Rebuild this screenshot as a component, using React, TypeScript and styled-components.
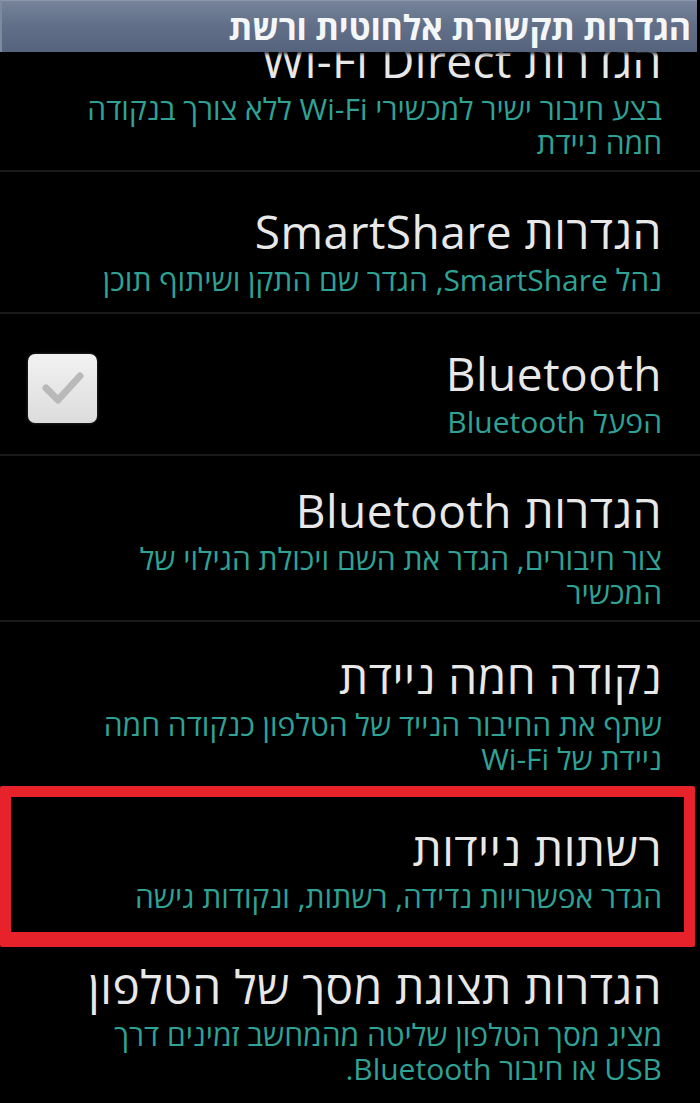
import * as React from "react";
import styled, { createGlobalStyle } from "styled-components";

const GlobalStyle = createGlobalStyle`
  html, body {
    margin: 0;
    padding: 0;
    background: #000;
  }
  body {
    font-family: "Open Sans", "DejaVu Sans", sans-serif;
  }
`;

const Screen = styled.div`
  width: 700px;
  height: 1103px;
  background: #000;
  display: flex;
  flex-direction: column;
  overflow: hidden;
  direction: rtl;
`;

const TitleBar = styled.header`
  flex: 0 0 auto;
  height: 52px;
  margin-right: 3px;
  padding: 0 6px 0 0;
  display: flex;
  align-items: center;
  background: linear-gradient(#76839a 0%, #627189 45%, #55647c 100%);
  border-top: 1px solid #8c98aa;
  border-left: 2px solid #7e8a9d;
  box-sizing: border-box;
  position: relative;
  z-index: 3;
  box-shadow: 0 2px 3px rgba(0, 0, 0, 0.8);
`;

const TitleText = styled.h1`
  margin: 0;
  font-size: 34px;
  font-weight: 700;
  color: #f4f6f8;
  letter-spacing: -0.2px;
  white-space: nowrap;
`;

const ScrollArea = styled.div`
  flex: 1 1 auto;
  overflow: hidden;
  position: relative;
  z-index: 1;
`;

const ListBody = styled.div<{ $offset: number }>`
  margin-top: ${(p) => -p.$offset}px;
  display: flex;
  flex-direction: column;
`;

const Row = styled.div<{ $divider?: boolean; $minHeight?: number }>`
  min-height: ${(p) => p.$minHeight ?? 142}px;
  box-sizing: border-box;
  padding: 26px 38px 10px 28px;
  display: flex;
  align-items: center;
  gap: 20px;
  border-bottom: ${(p) =>
    p.$divider === false ? "none" : "2px solid #1a1a1a"};
`;

const RowText = styled.div`
  flex: 1 1 auto;
  display: flex;
  flex-direction: column;
  gap: 4px;
`;

const RowTitle = styled.div`
  font-size: 46px;
  line-height: 56px;
  color: #e8e8e8;
  letter-spacing: 0.5px;
  white-space: nowrap;
`;

const RowSummary = styled.div`
  max-width: 612px;
  font-size: 30px;
  line-height: 34px;
  color: #2fa295;
`;

const Check = styled.div`
  flex: 0 0 auto;
  width: 69px;
  height: 69px;
  margin-bottom: 8px;
  border-radius: 7px;
  background: linear-gradient(#f2f2f2, #dcdcdc);
  display: flex;
  align-items: center;
  justify-content: center;
  box-shadow: 0 0 3px rgba(255, 255, 255, 0.25);
`;

const Marked = styled.div`
  position: relative;
`;

const MarkFrame = styled.div`
  position: absolute;
  top: 0;
  left: 0;
  right: 5px;
  bottom: -15px;
  border: 11px solid #e8222b;
  border-bottom-width: 15px;
  border-radius: 2px;
  z-index: 2;
  pointer-events: none;
`;

interface ItemProps {
  title: string;
  summary: React.ReactNode;
  checked?: boolean;
  divider?: boolean;
  minHeight?: number;
}

const CheckMark = () => (
  <svg width="46" height="40" viewBox="0 0 46 40">
    <path
      d="M6 20 L18 32 L40 8"
      fill="none"
      stroke="#b9b9b9"
      strokeWidth="7"
      strokeLinecap="round"
      strokeLinejoin="round"
    />
  </svg>
);

const SettingsItem: React.FunctionComponent<ItemProps> = ({
  title,
  summary,
  checked,
  divider,
  minHeight,
}) => (
  <Row $divider={divider} $minHeight={minHeight}>
    <RowText>
      <RowTitle>{title}</RowTitle>
      <RowSummary>{summary}</RowSummary>
    </RowText>
    {checked && (
      <Check>
        <CheckMark />
      </Check>
    )}
  </Row>
);

export default function App() {
  return (
    <>
      <GlobalStyle />
      <Screen>
        <TitleBar>
          <TitleText>הגדרות תקשורת אלחוטית ורשת</TitleText>
        </TitleBar>
        <ScrollArea>
          <ListBody $offset={46}>
            <SettingsItem
              title="הגדרות Wi-Fi Direct"
              summary="בצע חיבור ישיר למכשירי Wi-Fi ללא צורך בנקודה חמה ניידת"
            />
            <SettingsItem
              title="הגדרות SmartShare"
              summary="נהל SmartShare, הגדר שם התקן ושיתוף תוכן"
            />
            <SettingsItem title="Bluetooth" summary="הפעל Bluetooth" checked />
            <SettingsItem
              title="הגדרות Bluetooth"
              summary="צור חיבורים, הגדר את השם ויכולת הגילוי של המכשיר"
            />
            <SettingsItem
              title="נקודה חמה ניידת"
              summary="שתף את החיבור הנייד של הטלפון כנקודה חמה ניידת של Wi-Fi"
              divider={false}
            />
            <Marked>
              <SettingsItem
                title="רשתות ניידות"
                summary="הגדר אפשרויות נדידה, רשתות, ונקודות גישה"
                divider={false}
                minHeight={146}
              />
              <MarkFrame />
            </Marked>
            <SettingsItem
              title="הגדרות תצוגת מסך של הטלפון"
              summary="מציג מסך הטלפון שליטה מהמחשב זמינים דרך USB או חיבור Bluetooth."
              divider={false}
            />
          </ListBody>
        </ScrollArea>
      </Screen>
    </>
  );
}
